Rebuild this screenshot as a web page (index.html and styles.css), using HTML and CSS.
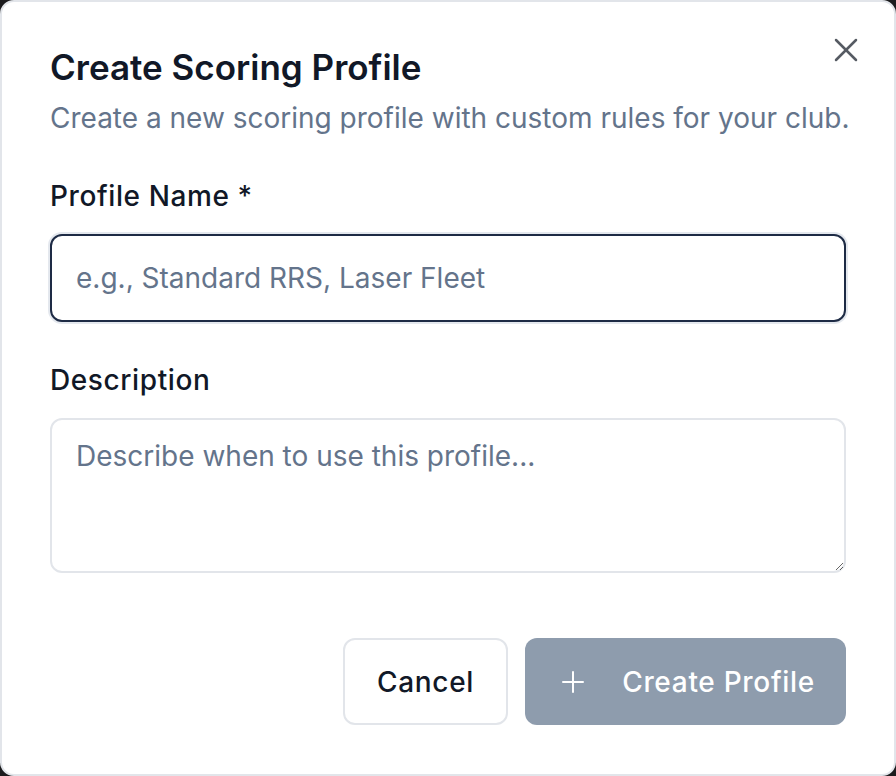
FILE: index.html
```html
<!DOCTYPE html>
<html lang="en">
<head>
    <meta charset="UTF-8">
    <meta name="viewport" content="width=device-width, initial-scale=1.0">
    <title>Create Scoring Profile</title>
    <link rel="stylesheet" href="styles.css">
</head>
<body>
    <div class="dialog">
        <button class="close-btn" aria-label="Close">
            <svg width="40" height="40" viewBox="0 0 24 24" fill="none" stroke="currentColor" stroke-width="1.5" stroke-linecap="round" stroke-linejoin="round">
                <path d="M18 6 6 18"/>
                <path d="m6 6 12 12"/>
            </svg>
        </button>

        <div class="dialog-header">
            <h1>Create Scoring Profile</h1>
            <p>Create a new scoring profile with custom rules for your club.</p>
        </div>

        <div class="field">
            <label for="profile-name">Profile Name *</label>
            <input type="text" id="profile-name" class="focused" placeholder="e.g., Standard RRS, Laser Fleet">
        </div>

        <div class="field">
            <label for="profile-desc">Description</label>
            <textarea id="profile-desc" placeholder="Describe when to use this profile..."></textarea>
        </div>

        <div class="dialog-footer">
            <button class="btn btn-outline">Cancel</button>
            <button class="btn btn-primary" disabled>
                <svg width="24" height="24" viewBox="0 0 24 24" fill="none" stroke="currentColor" stroke-width="2" stroke-linecap="round">
                    <path d="M2 12h20"/>
                    <path d="M12 2v20"/>
                </svg>
                Create Profile
            </button>
        </div>
    </div>
</body>
</html>
```

FILE: styles.css
```css
* {
    box-sizing: border-box;
}

body {
    margin: 0;
    background-color: #1c1c1e;
    font-family: Inter, "Noto Sans", sans-serif;
    color: #111827;
}

.dialog {
    position: relative;
    width: 896px;
    height: 776px;
    background-color: #fff;
    border: 2px solid #e2e5ea;
    border-radius: 14px;
    padding: 39px 48px 0 48px;
}

.close-btn {
    position: absolute;
    top: 28px;
    right: 28px;
    padding: 0;
    border: none;
    background: none;
    color: #565b63;
    cursor: pointer;
}

.close-btn svg {
    display: block;
}

.dialog-header h1 {
    margin: 0;
    font-size: 35px;
    font-weight: 600;
    line-height: 52px;
    color: #111827;
}

.dialog-header p {
    margin: 0;
    font-size: 28px;
    line-height: 50px;
    white-space: nowrap;
    color: #64748b;
}

.field {
    margin-top: 33px;
}

.field + .field {
    margin-top: 38px;
}

.field label {
    display: block;
    font-size: 28px;
    font-weight: 500;
    letter-spacing: 0.6px;
    line-height: 40px;
    color: #111827;
    margin-bottom: 18px;
}

.field input,
.field textarea {
    display: block;
    width: 100%;
    border: 2px solid #e2e5ea;
    border-radius: 12px;
    background: #fff;
    font-family: inherit;
    font-size: 28px;
    color: #111827;
    padding: 0 24px;
}

.field input {
    height: 88px;
}

.field input.focused {
    border-color: #1e2b45;
    box-shadow: 0 0 0 2px #e4e8ee;
    outline: none;
}

.field textarea {
    height: 155px;
    padding-top: 16px;
    line-height: 40px;
    resize: vertical;
}

.field input::placeholder,
.field textarea::placeholder {
    color: #64748b;
}

.dialog-footer {
    display: flex;
    justify-content: flex-end;
    gap: 17px;
    margin-top: 65px;
}

.btn {
    display: flex;
    align-items: center;
    height: 87px;
    border-radius: 12px;
    font-family: inherit;
    font-size: 28px;
    font-weight: 500;
    letter-spacing: 0.7px;
    cursor: pointer;
}

.btn-outline {
    padding: 0 32px;
    background: #fff;
    border: 2px solid #e2e5ea;
    color: #111827;
}

.btn-primary {
    padding: 0 31px 0 36px;
    gap: 37px;
    background-color: #8e9cad;
    border: none;
    color: #fff;
}
```
